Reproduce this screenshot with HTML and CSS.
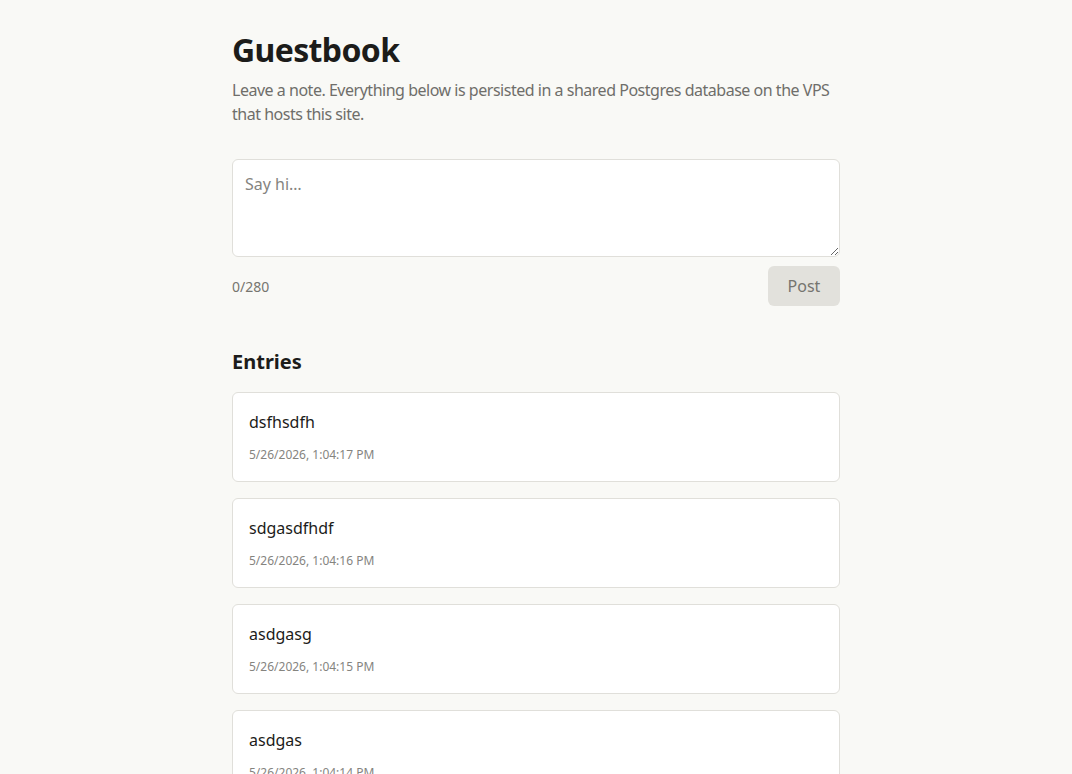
FILE: index.html
```html
<!DOCTYPE html>
<html lang="en">
<head>
  <meta charset="UTF-8" />
  <meta name="viewport" content="width=device-width, initial-scale=1.0"/>
  <title>Guestbook</title>
  <link rel="stylesheet" href="styles.css">
</head>
<body>

  <main class="page">
    <h1 class="title">Guestbook</h1>
    <p class="lead">Leave a note. Everything below is persisted in a shared Postgres database on the VPS that hosts this site.</p>

    <form class="note-form">
      <textarea class="note-input" placeholder="Say hi…" maxlength="280"></textarea>
      <div class="form-row">
        <span class="counter">0/280</span>
        <button type="submit" class="post-btn" disabled>Post</button>
      </div>
    </form>

    <h2 class="section-title">Entries</h2>

    <ul class="entries">
      <li class="entry">
        <p class="entry-text">dsfhsdfh</p>
        <time class="entry-date">5/26/2026, 1:04:17 PM</time>
      </li>
      <li class="entry">
        <p class="entry-text">sdgasdfhdf</p>
        <time class="entry-date">5/26/2026, 1:04:16 PM</time>
      </li>
      <li class="entry">
        <p class="entry-text">asdgasg</p>
        <time class="entry-date">5/26/2026, 1:04:15 PM</time>
      </li>
      <li class="entry">
        <p class="entry-text">asdgas</p>
        <time class="entry-date">5/26/2026, 1:04:14 PM</time>
      </li>
    </ul>
  </main>

</body>
</html>
```

FILE: styles.css
```css
body {
  margin: 0;
  background: #f9f9f6;
  color: #1c1c1a;
  font-family: "Noto Sans", "Open Sans", sans-serif;
}

.page {
  max-width: 608px;
  margin: 0 auto;
  padding: 28px 0 40px;
}

.title {
  margin: 0;
  font-size: 32px;
  line-height: 44px;
  font-weight: 700;
  letter-spacing: -0.02em;
}

.lead {
  margin: 6px 0 0;
  font-size: 16px;
  line-height: 24px;
  letter-spacing: -0.03em;
  color: #6f6e6a;
}

.note-form {
  margin-top: 33px;
}

.note-input {
  display: block;
  width: 100%;
  height: 98px;
  box-sizing: border-box;
  padding: 12px;
  border: 1px solid #e0dfda;
  border-radius: 6px;
  background: white;
  font-family: inherit;
  font-size: 16px;
  line-height: 24px;
  color: #1c1c1a;
  resize: vertical;
}

.note-input::placeholder {
  color: #85847f;
}

.form-row {
  display: flex;
  align-items: center;
  justify-content: space-between;
  margin-top: 9px;
}

.counter {
  font-size: 14px;
  color: #76756f;
}

.post-btn {
  width: 72px;
  height: 40px;
  border: none;
  border-radius: 6px;
  background: #e2e1dc;
  color: #75746f;
  font-family: inherit;
  font-size: 16px;
}

.section-title {
  margin: 41px 0 0;
  font-size: 20px;
  line-height: 30px;
  font-weight: 700;
}

.entries {
  list-style: none;
  margin: 15px 0 0;
  padding: 0;
  display: flex;
  flex-direction: column;
  gap: 16px;
}

.entry {
  background: white;
  border: 1px solid #e0dfda;
  border-radius: 6px;
  padding: 17px 16px 17px;
}

.entry-text {
  margin: 0;
  font-size: 16px;
  line-height: 24px;
}

.entry-date {
  display: block;
  margin-top: 12px;
  font-size: 12px;
  line-height: 18px;
  color: #85847f;
}
```
